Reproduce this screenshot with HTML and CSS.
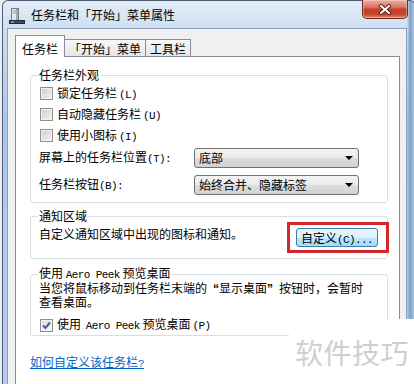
FILE: index.html
```html
<!DOCTYPE html>
<html lang="zh-CN">
<head>
    <meta charset="UTF-8">
    <title>任务栏和「开始」菜单属性</title>
    <link rel="stylesheet" href="styles.css">
</head>
<body>
    <div class="window">
        <div class="titlebar">
            <svg class="app-icon" width="16" height="16" viewBox="0 0 16 16">
                <rect x="2.5" y="0.5" width="7" height="12" fill="#e6e6e6" stroke="#7d7d7d"/>
                <rect x="7" y="1" width="2" height="11" fill="#a9a9a9"/>
                <line x1="4" y1="3" x2="7" y2="3" stroke="#9a9a9a"/>
                <line x1="4" y1="5" x2="7" y2="5" stroke="#9a9a9a"/>
                <rect x="0.5" y="12.5" width="15" height="3" fill="#3d4a5c" stroke="#1f2835"/>
                <rect x="2" y="13" width="3" height="2" fill="#6f93c4"/>
            </svg>
            <span class="title">任务栏和「开始」菜单属性</span>
            <div class="close">
                <svg width="14" height="11" viewBox="0 0 14 11">
                    <path d="M3 2 L11 9 M11 2 L3 9" stroke="#5a1c12" stroke-width="4" stroke-linecap="round"/>
                    <path d="M3 2 L11 9 M11 2 L3 9" stroke="#ffffff" stroke-width="2.2" stroke-linecap="round"/>
                </svg>
            </div>
        </div>
        <div class="dialog">
            <div class="tabs">
                <div class="tab active">任务栏</div>
                <div class="tab">「开始」菜单</div>
                <div class="tab">工具栏</div>
            </div>
            <div class="panel">
                <fieldset class="group group-look">
                    <legend>任务栏外观</legend>
                    <div class="check first"><span class="box"></span><span>锁定任务栏<span class="mono">(L)</span></span></div>
                    <div class="check"><span class="box"></span><span>自动隐藏任务栏<span class="mono">(U)</span></span></div>
                    <div class="check"><span class="box"></span><span>使用小图标<span class="mono">(I)</span></span></div>
                    <div class="field first-field">
                        <span class="field-label">屏幕上的任务栏位置<span class="mono">(T):</span></span>
                        <div class="select">底部<span class="arrow"></span></div>
                    </div>
                    <div class="field">
                        <span class="field-label">任务栏按钮<span class="mono">(B):</span></span>
                        <div class="select">始终合并、隐藏标签<span class="arrow"></span></div>
                    </div>
                </fieldset>

                <fieldset class="group group-notify">
                    <legend>通知区域</legend>
                    <div class="notify-row">
                        <span class="notify-text">自定义通知区域中出现的图标和通知。</span>
                        <span class="highlight"><span class="button">自定义<span class="mono">(C)...</span></span></span>
                    </div>
                </fieldset>

                <fieldset class="group group-peek">
                    <legend>使用 <span class="mono">Aero Peek</span> 预览桌面</legend>
                    <p class="peek-text">当您将鼠标移动到任务栏末端的<span class="q q-open">“</span>显示桌面<span class="q q-close">”</span>按钮时，会暂时<br>查看桌面。</p>
                    <div class="check peek-check"><span class="box checked"><svg width="11" height="11" viewBox="0 0 11 11"><path d="M2 5.5 L4.5 8 L9 2.5" fill="none" stroke="#4a5f9c" stroke-width="2"/></svg></span><span>使用 <span class="mono">Aero Peek</span> 预览桌面<span class="mono">(P)</span></span></div>
                </fieldset>

                <a class="help" href="#">如何自定义该任务栏<span class="mono">?</span></a>
            </div>
        </div>
    </div>
    <div class="watermark">软件技巧</div>
</body>
</html>
```

FILE: styles.css
```css
html, body {
    margin: 0;
}

body {
    position: relative;
    width: 414px;
    height: 384px;
    padding-left: 2px;
    box-sizing: border-box;
    overflow: hidden;
    background-color: #e9eff6;
    color: #000;
    font-family: "Noto Sans CJK SC", sans-serif;
    font-size: 12px;
    line-height: 16px;
}

.mono {
    font-family: "Liberation Mono", monospace;
    font-size: 11px;
    letter-spacing: -0.6px;
}

/* window frame */
.window {
    display: flex;
    flex-direction: column;
    width: 414px;
    height: 384px;
    padding: 0 8px 0 4px;
    box-sizing: border-box;
    border: 1px solid #4d5d73;
    border-bottom: none;
    border-radius: 6px 6px 0 0;
    background:
        linear-gradient(to right, rgba(0,0,0,0) 404px, #7f9fc7 407px, #a9c3e1 411px),
        linear-gradient(to bottom, #e3edf8 0, #cfdff0 28px, #aec7e4 120px, #b8cee8 100%);
}

.titlebar {
    display: flex;
    align-items: flex-start;
    height: 27px;
}

.app-icon {
    margin: 7px 0 0 2px;
}

.title {
    margin: 6px 0 0 6px;
}

.close {
    display: flex;
    justify-content: center;
    align-items: center;
    width: 44px;
    height: 18px;
    margin: -1px -1px 0 auto;
    border: 1px solid #6a2a1e;
    border-top: none;
    border-radius: 0 0 5px 5px;
    background: linear-gradient(to bottom, #eab1a3 0%, #d9735f 40%, #c43e28 52%, #c4452f 80%, #dc8c72 100%);
    box-shadow: inset 0 0 0 1px rgba(255, 220, 210, 0.45);
}

/* dialog body */
.dialog {
    display: flex;
    flex-direction: column;
    flex: 1;
    padding: 6px 6px 0 7px;
    border: 1px solid #8ba0bc;
    border-bottom: none;
    background-color: #f0f0f0;
}

.tabs {
    display: flex;
    align-items: flex-end;
    height: 21px;
}

.tab {
    height: 16px;
    padding: 0 4px;
    border: 1px solid #898c95;
    border-bottom: none;
    margin-right: -1px;
    background: linear-gradient(to bottom, #f8f8f8, #e6e6e6);
    line-height: 17px;
}

.tab.active {
    position: relative;
    z-index: 1;
    height: 21px;
    padding: 0 6px;
    margin-bottom: -1px;
    background: #fff;
    line-height: 26px;
}

.panel {
    flex: 1;
    padding: 11px 11px 0 14px;
    border: 1px solid #898c95;
    border-bottom: none;
    background-color: #fff;
}

/* group boxes */
.group {
    margin: 0;
    padding: 0 5px 7px 8px;
    min-width: 0;
    border: 1px solid #d5dfe5;
    border-radius: 3px;
}

.group legend {
    padding: 0 1px;
    margin-left: -1px;
    line-height: 14px;
    white-space: nowrap;
}

.group-notify {
    margin-top: 6px;
    padding-bottom: 5px;
}

.group-peek {
    margin-top: 7px;
    padding-bottom: 1px;
}

.check {
    display: flex;
    align-items: center;
    height: 21px;
    white-space: nowrap;
}

.check.first {
    margin-top: 1px;
}

.check .mono {
    margin-left: 2px;
}

.box {
    display: inline-flex;
    justify-content: center;
    align-items: center;
    width: 11px;
    height: 11px;
    margin: 0 4px 0 1px;
    border: 1px solid #8e8f8f;
    background: linear-gradient(135deg, #cdcdcd, #f4f4f4);
    box-shadow: inset 0 0 0 1px #f2f2f2;
}

.box.checked {
    background: linear-gradient(135deg, #dcdcdc, #fafafa);
}

.field {
    display: flex;
    align-items: center;
    height: 20px;
    margin-top: 7px;
}

.field.first-field {
    margin-top: 2px;
}

.field-label {
    width: 155px;
    white-space: nowrap;
}

.select {
    position: relative;
    width: 159px;
    height: 18px;
    padding-left: 4px;
    border: 1px solid #707070;
    border-radius: 3px;
    background: linear-gradient(to bottom, #f3f3f3 0%, #ebebeb 50%, #dddddd 50%, #d2d2d2 100%);
    line-height: 18px;
}

.arrow {
    position: absolute;
    right: 5px;
    top: 7px;
    width: 0;
    height: 0;
    border-left: 4px solid transparent;
    border-right: 4px solid transparent;
    border-top: 4px solid #000;
}

/* notification area */
.notify-row {
    display: flex;
    align-items: flex-start;
}

.notify-text {
    margin-top: 3px;
    white-space: nowrap;
}

.highlight {
    margin: -1px -7px 0 auto;
    padding: 3px 8px 3px 6px;
    border: 3px solid #d0282b;
}

.button {
    display: block;
    width: 80px;
    height: 17px;
    border: 1px solid #3c7fb1;
    border-radius: 3px;
    background: linear-gradient(to bottom, #eaf6fd 0%, #d9f0fc 50%, #bee6fd 50%, #a7d9f5 100%);
    text-align: center;
    line-height: 17px;
    white-space: nowrap;
}

/* aero peek */
.peek-text {
    margin: 0;
    font-family: "Liberation Sans", "Noto Sans CJK SC", sans-serif;
    line-height: 14px;
    white-space: nowrap;
}

.q {
    display: inline-block;
    width: 12px;
    font-weight: bold;
}

.q-open {
    text-align: right;
}

.q-close {
    text-align: left;
}

.peek-check {
    height: 18px;
    margin-top: 6px;
}

.help {
    display: inline-block;
    margin-top: 18px;
    color: #0066cc;
    text-decoration: underline;
}

.watermark {
    position: absolute;
    left: 289px;
    top: 319px;
    width: 119px;
    height: 47px;
    padding: 18px 0 0 6px;
    background-color: #fff;
    color: #cfcfcf;
    font-size: 28px;
    line-height: 30px;
    letter-spacing: 0.5px;
}
```
